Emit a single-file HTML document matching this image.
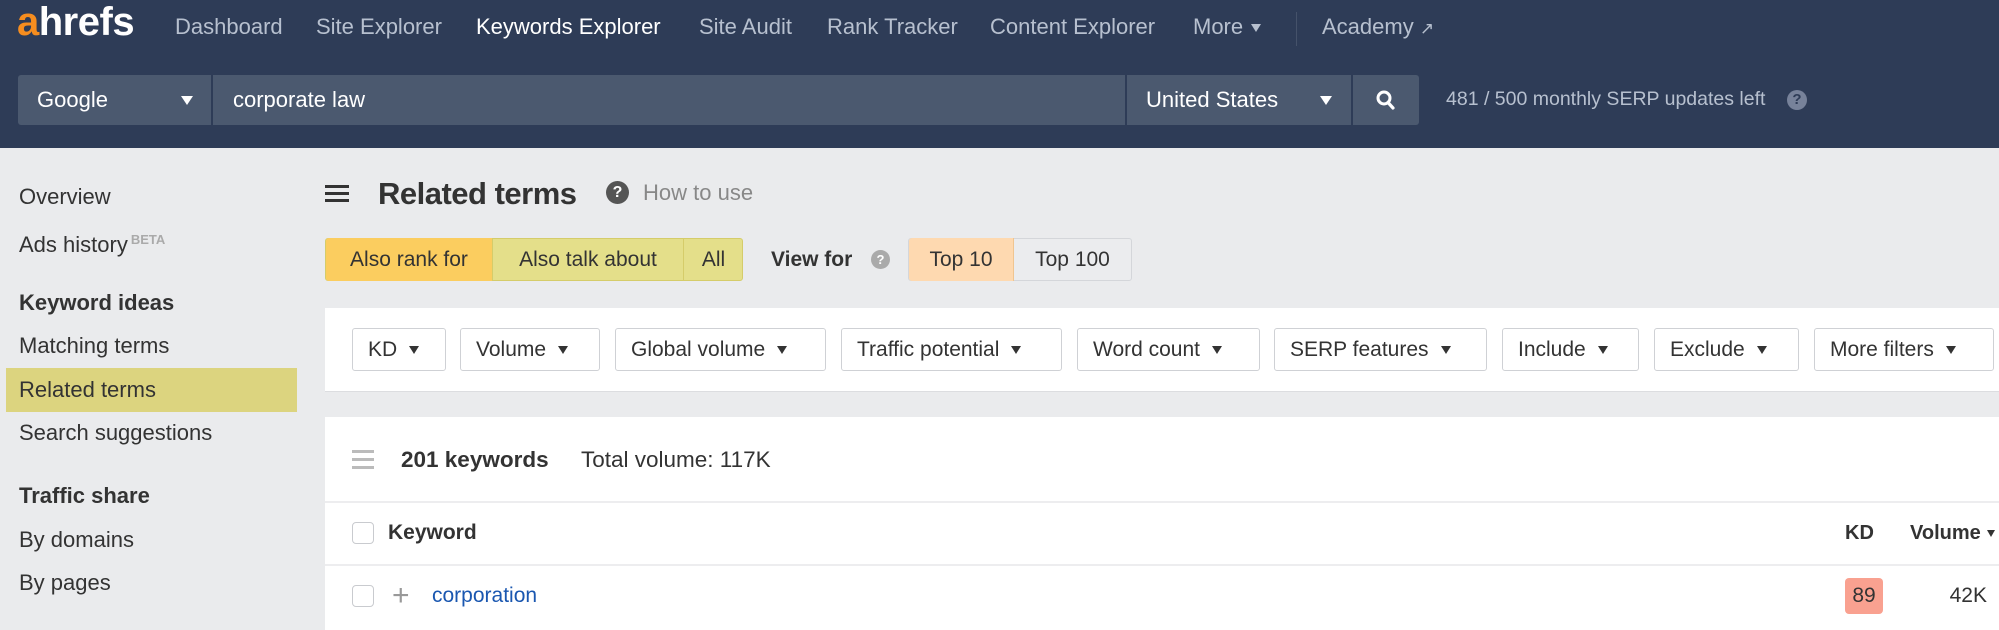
<!DOCTYPE html>
<html><head><meta charset="utf-8"><style>
*{margin:0;padding:0;box-sizing:border-box}
body{width:1999px;height:630px;overflow:hidden;background:#eaebed;font-family:"Liberation Sans",sans-serif;position:relative}
.a{position:absolute;white-space:nowrap}
.hdr{position:absolute;left:0;top:0;width:1999px;height:148px;background:#2e3c57}
.nav{top:14px;font-size:22px;color:#b7c0cf}
.tri{display:inline-block;width:0;height:0;border-left:6px solid transparent;border-right:6px solid transparent;border-top:9px solid currentColor;vertical-align:middle;margin-left:10px}
.sel{background:#4b596f;height:50px;top:75px;color:#fff;font-size:22px;line-height:50px}
.side{left:19px;font-size:22px;color:#333;line-height:30px}
.btn{top:238px;height:43px;line-height:43px;font-size:21px;color:#333;text-align:center}
.f{top:328px;height:43px;line-height:41px;font-size:21px;color:#333;border:1px solid #cfd1d5;border-radius:3px;background:#fff;padding-left:15px}
.f .tri{border-top-color:#333;margin-left:12px;border-left-width:5px;border-right-width:5px;border-top-width:8px}
.cb{width:22px;height:22px;border:1.5px solid #c9cbcf;border-radius:4px;background:#fff}
</style></head><body>
<div class="hdr"></div>
<div class="a" style="left:17px;top:0px;font-size:40px;font-weight:bold;color:#fff;letter-spacing:-0.5px"><span style="color:#f68d1f">a</span>hrefs</div>
<div class="a nav" style="left:175px">Dashboard</div>
<div class="a nav" style="left:316px">Site Explorer</div>
<div class="a nav" style="left:476px;color:#fff">Keywords Explorer</div>
<div class="a nav" style="left:699px">Site Audit</div>
<div class="a nav" style="left:827px">Rank Tracker</div>
<div class="a nav" style="left:990px">Content Explorer</div>
<div class="a nav" style="left:1193px">More<span class="tri" style="border-top-width:8px;border-left-width:5px;border-right-width:5px;margin-left:8px"></span></div>
<div class="a" style="left:1296px;top:12px;width:1px;height:34px;background:#45526a"></div>
<div class="a nav" style="left:1322px">Academy <span style="font-size:17px">&#x2197;</span></div>

<div class="a sel" style="left:18px;width:193px;padding-left:19px;border-radius:3px 0 0 3px">Google<span class="tri" style="position:absolute;left:163px;top:21px;margin:0;border-left-width:6px;border-right-width:6px"></span></div>
<div class="a sel" style="left:213px;width:912px;padding-left:20px">corporate law</div>
<div class="a sel" style="left:1127px;width:224px;padding-left:19px">United States<span class="tri" style="position:absolute;left:193px;top:21px;margin:0"></span></div>
<div class="a sel" style="left:1353px;width:66px;border-radius:0 3px 3px 0">
<svg style="position:absolute;left:23px;top:15px" width="20" height="21" viewBox="0 0 20 21"><circle cx="8" cy="8" r="6" stroke="#fff" stroke-width="3" fill="none"/><line x1="12" y1="12.5" x2="17" y2="18" stroke="#fff" stroke-width="3.2" stroke-linecap="round"/></svg></div>
<div class="a" style="left:1446px;top:88px;font-size:19.5px;color:#b7c0cf">481 / 500 monthly SERP updates left</div>
<div class="a" style="left:1787px;top:90px;width:20px;height:20px;border-radius:50%;background:#77829a;color:#2e3c57;font-size:15px;font-weight:bold;text-align:center;line-height:20px">?</div>

<div class="a side" style="top:182px">Overview</div>
<div class="a side" style="top:225px">Ads history<sup style="font-size:13px;color:#aaa;font-weight:bold;margin-left:3px;vertical-align:8px">BETA</sup></div>
<div class="a side" style="top:288px;font-weight:bold">Keyword ideas</div>
<div class="a side" style="top:331px">Matching terms</div>
<div class="a" style="left:6px;top:368px;width:291px;height:44px;background:#dcd47f"></div>
<div class="a side" style="top:375px">Related terms</div>
<div class="a side" style="top:418px">Search suggestions</div>
<div class="a side" style="top:481px;font-weight:bold">Traffic share</div>
<div class="a side" style="top:525px">By domains</div>
<div class="a side" style="top:568px">By pages</div>

<div class="a" style="left:325px;top:185px;width:24px;height:3px;background:#333;box-shadow:0 7px 0 #333,0 14px 0 #333"></div>
<div class="a" style="left:378px;top:176px;font-size:31px;font-weight:bold;color:#333;letter-spacing:-0.5px">Related terms</div>
<div class="a" style="left:606px;top:181px;width:23px;height:23px;border-radius:50%;background:#555;color:#fff;font-size:16px;font-weight:bold;text-align:center;line-height:23px">?</div>
<div class="a" style="left:643px;top:180px;font-size:22px;color:#888">How to use</div>

<div class="a" style="left:325px;top:238px;width:418px;height:43px;border:1px solid #d5cc6a;border-radius:3px;background:#e4df8a"></div>
<div class="a btn" style="left:326px;width:166px;background:#fbcd5f;border-radius:3px 0 0 3px">Also rank for</div>
<div class="a btn" style="left:492px;width:191px;border-left:1px solid #d5cc6a">Also talk about</div>
<div class="a btn" style="left:683px;width:60px;border-left:1px solid #d5cc6a">All</div>
<div class="a" style="left:771px;top:248px;font-size:21px;font-weight:bold;color:#333">View for</div>
<div class="a" style="left:871px;top:250px;width:19px;height:19px;border-radius:50%;background:#aaa;color:#fff;font-size:13px;font-weight:bold;text-align:center;line-height:19px">?</div>
<div class="a" style="left:908px;top:238px;width:224px;height:43px;border:1px solid #d4d6da;border-radius:3px;background:#ebecee"></div>
<div class="a btn" style="left:909px;width:105px;background:#fed9b0;border-right:1px solid #f0c590;border-radius:3px 0 0 3px">Top 10</div>
<div class="a btn" style="left:1014px;width:117px">Top 100</div>

<div class="a" style="left:325px;top:308px;width:1674px;height:84px;background:#fff;border-bottom:1px solid #dcdde0"></div>
<div class="a f" style="left:352px;width:94px">KD<span class="tri"></span></div>
<div class="a f" style="left:460px;width:140px">Volume<span class="tri"></span></div>
<div class="a f" style="left:615px;width:211px">Global volume<span class="tri"></span></div>
<div class="a f" style="left:841px;width:221px">Traffic potential<span class="tri"></span></div>
<div class="a f" style="left:1077px;width:183px">Word count<span class="tri"></span></div>
<div class="a f" style="left:1274px;width:213px">SERP features<span class="tri"></span></div>
<div class="a f" style="left:1502px;width:137px">Include<span class="tri"></span></div>
<div class="a f" style="left:1654px;width:145px">Exclude<span class="tri"></span></div>
<div class="a f" style="left:1814px;width:180px">More filters<span class="tri"></span></div>

<div class="a" style="left:325px;top:417px;width:1674px;height:213px;background:#fff"></div>
<div class="a" style="left:352px;top:450px;width:22px;height:3px;background:#bbb;box-shadow:0 8px 0 #bbb,0 16px 0 #bbb"></div>
<div class="a" style="left:401px;top:447px;font-size:22.5px;font-weight:bold;color:#333">201 keywords</div>
<div class="a" style="left:581px;top:447px;font-size:22.5px;color:#333">Total volume: 117K</div>
<div class="a" style="left:325px;top:501px;width:1674px;height:2px;background:#ededef"></div>
<div class="a cb" style="left:352px;top:522px"></div>
<div class="a" style="left:388px;top:521px;font-size:21px;font-weight:bold;color:#333">Keyword</div>
<div class="a" style="left:1845px;top:522px;font-size:20px;font-weight:bold;color:#333">KD</div>
<div class="a" style="left:1910px;top:522px;font-size:20px;font-weight:bold;color:#333">Volume<span class="tri" style="margin-left:6px;border-top-width:7px;border-left-width:4px;border-right-width:4px"></span></div>
<div class="a" style="left:325px;top:564px;width:1674px;height:2px;background:#ededef"></div>
<div class="a cb" style="left:352px;top:585px"></div>
<div class="a" style="left:392px;top:581px;font-size:30px;color:#999;line-height:30px">+</div>
<div class="a" style="left:432px;top:584px;font-size:21px;color:#1a57b0">corporation</div>
<div class="a" style="left:1845px;top:578px;width:38px;height:36px;border-radius:4px;background:#f9a190;color:#333;font-size:21px;text-align:center;line-height:36px">89</div>
<div class="a" style="left:1940px;top:584px;width:47px;text-align:right;font-size:21px;color:#333">42K</div>
</body></html>
